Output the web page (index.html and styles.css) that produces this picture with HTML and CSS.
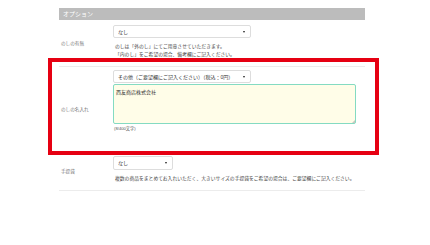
FILE: index.html
```html
<!DOCTYPE html>
<html lang="ja">
<head>
  <meta charset="UTF-8" />
  <title>オプション</title>
  <meta name="viewport" content="width=device-width, initial-scale=1.0" />
  <link rel="stylesheet" href="styles.css">
</head>
<body>

<div id="page">
  <div class="section-head">オプション</div>

  <div class="opt-row first">
    <div class="opt-label">のしの有無</div>
    <div class="opt-body">
      <div class="select wide">なし</div>
      <p class="note">のしは「外のし」にてご用意させていただきます。<br>「内のし」をご希望の場合、備考欄にご記入ください。</p>
    </div>
  </div>

  <div class="opt-row name-row">
    <div class="opt-label">のしの名入れ</div>
    <div class="opt-body">
      <div class="select wide">その他（ご要望欄にご記入ください）（税込：0円）</div>
      <div class="name-field">
        <textarea class="name-box">西友商店株式会社</textarea>
      </div>
      <div class="count">(8/400文字)</div>
    </div>
  </div>

  <div class="opt-row last">
    <div class="opt-label">手提袋</div>
    <div class="opt-body">
      <div class="select narrow">なし</div>
      <p class="note">複数の商品をまとめてお入れいただく、大きいサイズの手提袋をご希望の場合は、ご要望欄にご記入ください。</p>
    </div>
  </div>

  <div class="highlight"></div>
</div>

</body>
</html>
```

FILE: styles.css
```css
html, body {
  margin: 0; padding: 0;
  background: #fff;
  font-family: "Liberation Sans", "Noto Sans CJK JP", sans-serif;
  color: #333;
}

#page {
  position: relative;
  width: 306px;
  margin-left: 59px;
  padding-top: 8px;
}

.section-head {
  height: 12px;
  line-height: 12px;
  background: #bcbcbc;
  color: #fff;
  font-size: 6px;
  padding-left: 4px;
}

.opt-row {
  display: grid;
  grid-template-columns: 54px 1fr;
  align-items: center;
  border-top: 1px solid #ececec;
}

.opt-row.first { border-top: none; }
.opt-row.first .opt-body { padding: 5px 0 8px; }
.opt-row.name-row .opt-body { padding: 3px 0 19px; }
.opt-row.last { border-bottom: 1px solid #ececec; }
.opt-row.last .opt-body { padding: 4px 0 7px; }

.opt-label {
  font-size: 4.6px;
  color: #777;
  padding-left: 2px;
}

.select {
  position: relative;
  box-sizing: border-box;
  height: 13px;
  line-height: 12px;
  border: 1px solid #ddd;
  border-radius: 2px;
  background: #fff;
  font-size: 5px;
  color: #333;
  padding-left: 4px;
}
.select::after {
  content: "";
  position: absolute;
  right: 5px; top: 5px;
  border-left: 1.3px solid transparent;
  border-right: 1.3px solid transparent;
  border-top: 2px solid #222;
}
.select.wide { width: 138px; }
.select.narrow { width: 60px; height: 14px; line-height: 13px; }

.note {
  margin: 5px 0 0;
  font-size: 4.8px;
  line-height: 7.5px;
  color: #444;
  padding-left: 2px;
}

.name-field {
  position: relative;
  width: 243px;
  margin-top: 1px;
}
.name-field::after {
  content: "";
  position: absolute;
  right: 1px; bottom: 1px;
  border-left: 3px solid transparent;
  border-bottom: 3px solid #c8c8c0;
}

.name-box {
  display: block;
  box-sizing: border-box;
  width: 243px;
  height: 40px;
  margin: 0;
  padding: 3px 2px;
  background: #fffde8;
  border: 1px solid #84dbc2;
  border-radius: 2px;
  font-family: "Liberation Sans", "Noto Sans CJK JP", sans-serif;
  font-size: 5px;
  color: #333;
  outline: none;
  resize: none;
}

.count {
  margin-top: 2px;
  font-size: 4.2px;
  line-height: 6px;
  color: #555;
  padding-left: 1px;
}

.highlight {
  position: absolute;
  left: -11px; top: 58px;
  width: 323px; height: 89px;
  border: 4px solid #e60012;
  pointer-events: none;
}
```
